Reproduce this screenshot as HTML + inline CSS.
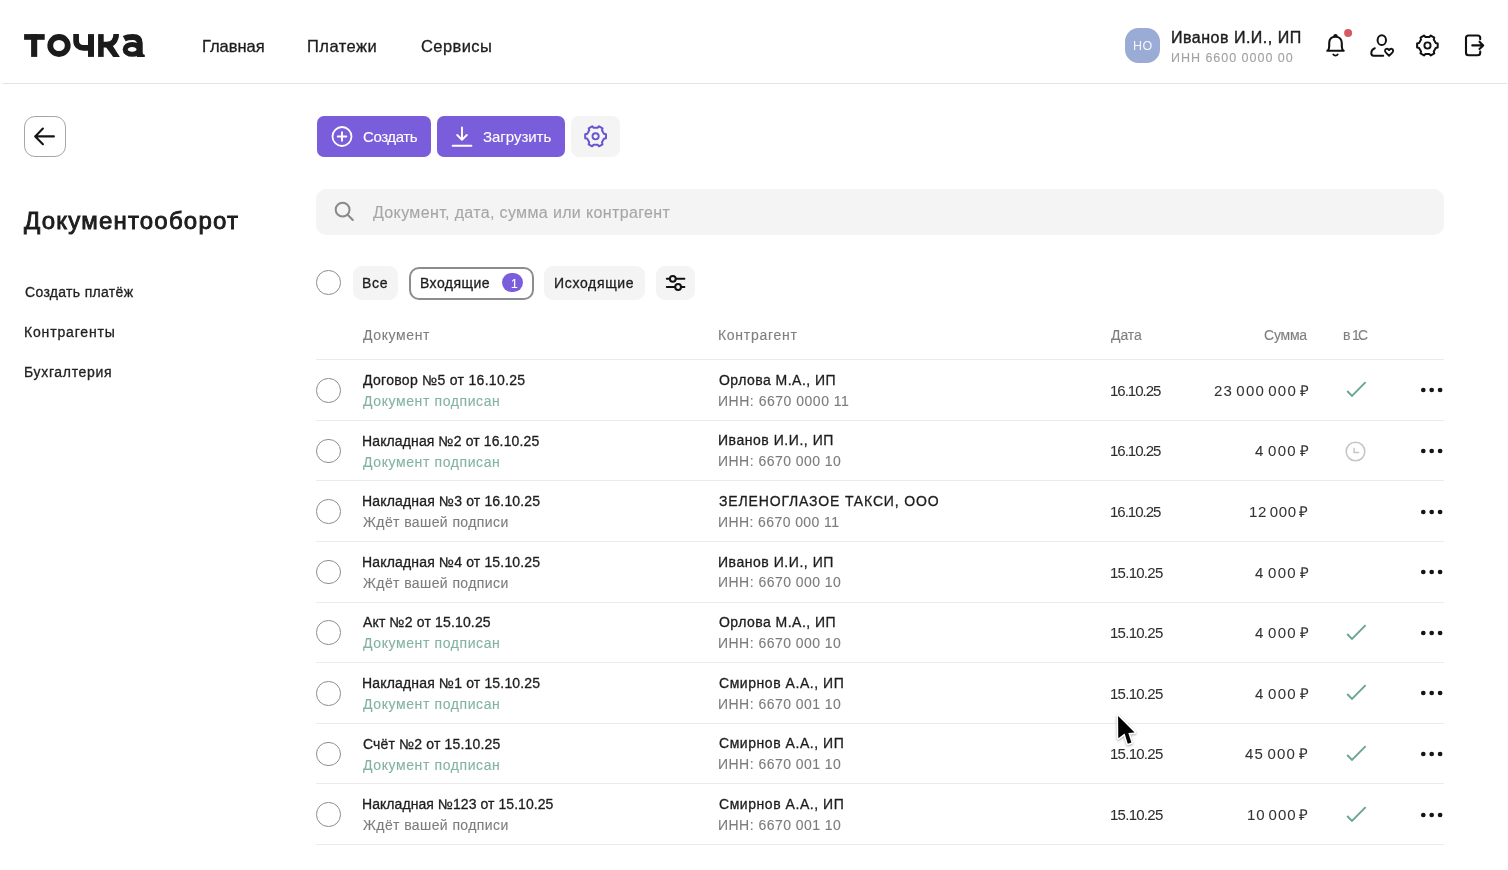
<!DOCTYPE html>
<html lang="ru">
<head>
<meta charset="utf-8">
<title>Документооборот — Точка</title>
<style>
html,body{margin:0;padding:0;background:#fff;}
body{width:1508px;height:870px;position:relative;overflow:hidden;font-family:"Liberation Sans",sans-serif;}
.t{position:absolute;white-space:pre;font-family:"Liberation Sans",sans-serif;will-change:transform;}
.sep{position:absolute;left:316px;width:1128px;height:1px;background:#ebebeb;}
.cb{position:absolute;left:316.3px;width:22.5px;height:22.5px;border:1px solid #8e8e8e;border-radius:50%;}
.dots{position:absolute;left:1419px;fill:#151515;}
.ic{position:absolute;}
.abs{position:absolute;}
</style>
</head>
<body>
<!-- header -->
<svg class="abs" style="left:0;top:0" width="160" height="80" viewBox="0 0 160 80">
  <g fill="#1b1b1b">
    <rect x="24.1" y="34.1" width="20.6" height="5.7"/>
    <rect x="31.1" y="34.1" width="6.1" height="22.8"/>
  </g>
  <ellipse cx="59" cy="45.5" rx="8.75" ry="8.5" fill="none" stroke="#1b1b1b" stroke-width="5.8"/>
  <path d="M76.1 34.1 V40.5 C76.1 45.5 79 47.8 83.5 47.8 H90" fill="none" stroke="#1b1b1b" stroke-width="5.7"/>
  <rect x="88" y="34.1" width="6" height="22.8" fill="#1b1b1b"/>
  <rect x="98.1" y="34.1" width="5.6" height="22.8" fill="#1b1b1b"/>
  <path d="M101 44.6 H106.5 C112.5 44.6 116.2 40.5 116.2 34.1" fill="none" stroke="#1b1b1b" stroke-width="5.6"/>
  <path d="M105.5 46.5 L111.3 43.6 L119.9 56.9 H113.2 Z" fill="#1b1b1b"/>
  <path d="M124.2 38.6 C126.3 37.5 129.5 37.05 132.8 37.05 C137.8 37.05 139.75 39.6 139.75 43.5 V56.9" fill="none" stroke="#1b1b1b" stroke-width="5.9"/>
  <path d="M138 51.5 H141.8 C142.2 53.6 143.3 54.6 144.8 54.8 V56.9 H138 Z" fill="#1b1b1b"/>
  <ellipse cx="132.2" cy="49.4" rx="7.0" ry="4.9" fill="none" stroke="#1b1b1b" stroke-width="5.1"/>
</svg>
<div class="abs" style="left:3px;top:83px;width:1504px;height:1px;background:#e3e3e3"></div>
<div class="abs" style="left:1125px;top:28px;width:35px;height:35px;border-radius:13.5px;background:#9aabd6"></div>
<!-- bell -->
<svg class="abs" style="left:1316px;top:24px" width="40" height="40" viewBox="0 0 40 40">
  <path d="M11.3 26.8 H27.7 C26.2 25.8 25.8 24.5 25.8 22.5 V19.2 C25.8 15 23.2 12.7 19.5 12.7 C15.8 12.7 13.2 15 13.2 19.2 V22.5 C13.2 24.5 12.8 25.8 11.3 26.8 Z" fill="none" stroke="#111" stroke-width="2.1" stroke-linejoin="round"/>
  <path d="M18.2 12.3 C18.3 10.5 20.7 10.5 20.8 12.3" fill="none" stroke="#111" stroke-width="2"/>
  <path d="M17.3 30.5 C18.4 32 20.6 32 21.7 30.5" fill="none" stroke="#111" stroke-width="1.8" stroke-linecap="round"/>
  <circle cx="32.1" cy="8.9" r="4" fill="#d65a61"/>
</svg>
<!-- user heart -->
<svg class="abs" style="left:1360px;top:24px" width="40" height="40" viewBox="0 0 40 40">
  <ellipse cx="21.8" cy="16.2" rx="4.2" ry="4.9" fill="none" stroke="#111" stroke-width="2"/>
  <path d="M14.8 24.2 C12.6 25 11.3 27 11.3 29.3 C11.3 31 12 31.7 13.5 31.7 H23.2" fill="none" stroke="#111" stroke-width="2" stroke-linecap="round"/>
  <path d="M29.1 31.7 L25.9 28.6 C24.6 27.3 24.8 25.2 26.4 24.8 C27.6 24.5 28.5 25.2 29.1 26.1 C29.7 25.2 30.6 24.5 31.8 24.8 C33.4 25.2 33.6 27.3 32.3 28.6 Z" fill="none" stroke="#111" stroke-width="1.9" stroke-linejoin="round"/>
</svg>
<!-- gear -->
<svg class="abs" style="left:1407px;top:25px" width="40" height="40" viewBox="0 0 40 40">
  <path stroke-linejoin="round" d="M28.72 23.04 L30.71 22.50 L30.71 18.50 L28.72 17.96 L26.76 14.57 L27.29 12.58 L23.82 10.57 L22.36 12.02 L18.44 12.02 L16.98 10.57 L13.51 12.58 L14.04 14.57 L12.08 17.96 L10.09 18.50 L10.09 22.50 L12.08 23.04 L14.04 26.43 L13.51 28.42 L16.98 30.43 L18.44 28.98 L22.36 28.98 L23.82 30.43 L27.29 28.42 L26.76 26.43 Z" fill="none" stroke="#111" stroke-width="2"/>
  <circle cx="20.5" cy="20.5" r="3.1" fill="none" stroke="#111" stroke-width="1.9"/>
</svg>
<!-- exit -->
<svg class="abs" style="left:1454.4px;top:24.6px" width="40" height="40" viewBox="0 0 40 40">
  <path d="M26.2 14.2 V13 C26.2 11.3 25.4 10.5 23.7 10.5 H14.5 C12.8 10.5 12 11.3 12 13 V27.8 C12 29.5 12.8 30.3 14.5 30.3 H23.7 C25.4 30.3 26.2 29.5 26.2 27.8 V26.6" fill="none" stroke="#111" stroke-width="2.1" stroke-linecap="round"/>
  <path d="M18.3 20.4 H29.2 M25.5 16.7 L29.2 20.4 L25.5 24.1" fill="none" stroke="#111" stroke-width="2.1" stroke-linecap="round" stroke-linejoin="round"/>
</svg>

<!-- back button -->
<div class="abs" style="left:24.2px;top:116px;width:39.6px;height:38.9px;border:1px solid #a6a6a6;border-radius:11px"></div>
<svg class="abs" style="left:24px;top:116px" width="42" height="41" viewBox="0 0 42 41">
  <path d="M29.9 20.4 H11.2 M18.9 12.6 L11.2 20.4 L18.9 28.2" fill="none" stroke="#141414" stroke-width="2.1" stroke-linecap="round" stroke-linejoin="round"/>
</svg>

<!-- buttons -->
<div class="abs" style="left:316.5px;top:116px;width:114.5px;height:41px;border-radius:7px;background:#7a5ddb"></div>
<svg class="abs" style="left:316.5px;top:116px" width="50" height="41" viewBox="0 0 50 41">
  <circle cx="25" cy="20.5" r="9.5" fill="none" stroke="#fff" stroke-width="1.8"/>
  <path d="M25 16.2 V24.8 M20.7 20.5 H29.3" stroke="#fff" stroke-width="1.9" stroke-linecap="round"/>
</svg>
<div class="abs" style="left:436.6px;top:116px;width:128px;height:41px;border-radius:7px;background:#7a5ddb"></div>
<svg class="abs" style="left:436.6px;top:116px" width="50" height="41" viewBox="0 0 50 41">
  <path d="M25 11.4 V23.8 M20.2 19 L25 23.8 L29.8 19 M15.6 29.8 H34.4" fill="none" stroke="#fff" stroke-width="1.9" stroke-linecap="round" stroke-linejoin="round"/>
</svg>
<div class="abs" style="left:570.6px;top:116px;width:49px;height:41px;border-radius:8px;background:#f4f4f4"></div>
<svg class="abs" style="left:570.6px;top:116px" width="49" height="41" viewBox="0 0 49 41">
  <path stroke-linejoin="round" d="M32.92 22.84 L35.01 22.32 L35.01 18.28 L32.92 17.76 L30.96 14.37 L31.55 12.30 L28.05 10.28 L26.56 11.82 L22.64 11.82 L21.15 10.28 L17.65 12.30 L18.24 14.37 L16.28 17.76 L14.19 18.28 L14.19 22.32 L16.28 22.84 L18.24 26.23 L17.65 28.30 L21.15 30.32 L22.64 28.78 L26.56 28.78 L28.05 30.32 L31.55 28.30 L30.96 26.23 Z" fill="none" stroke="#6a55cf" stroke-width="2"/>
  <circle cx="24.6" cy="20.3" r="3.1" fill="none" stroke="#6a55cf" stroke-width="1.9"/>
</svg>

<!-- search -->
<div class="abs" style="left:316.3px;top:189.3px;width:1128px;height:45.5px;border-radius:10px;background:#f4f4f4"></div>
<svg class="abs" style="left:316.3px;top:189.3px" width="50" height="46" viewBox="0 0 50 46">
  <circle cx="26.6" cy="20.7" r="6.9" fill="none" stroke="#8a8a8a" stroke-width="2"/>
  <path d="M31.6 25.7 L36.8 30.9" stroke="#8a8a8a" stroke-width="2.1" stroke-linecap="round"/>
</svg>

<!-- filter row -->
<div class="abs" style="left:316.3px;top:270.2px;width:22.5px;height:22.5px;border:1px solid #8e8e8e;border-radius:50%"></div>
<div class="abs" style="left:352.7px;top:266.2px;width:45.5px;height:34px;border-radius:9px;background:#f4f4f4"></div>
<div class="abs" style="left:409.3px;top:267px;width:120.5px;height:28.5px;border:2px solid #8d8d8d;border-radius:10px;background:#fff"></div>
<div class="abs" style="left:501.6px;top:273.3px;width:21.5px;height:19.2px;border-radius:10px;background:#7a5ddb"></div>
<div class="abs" style="left:544px;top:266.3px;width:101.4px;height:33.6px;border-radius:9px;background:#f4f4f4"></div>
<div class="abs" style="left:656.1px;top:266.3px;width:39px;height:33.6px;border-radius:9px;background:#f4f4f4"></div>
<svg class="abs" style="left:656.1px;top:266.3px" width="39" height="34" viewBox="0 0 39 34">
  <path d="M10.8 12.8 H28.4 M10.8 21 H28.4" stroke="#111" stroke-width="2" stroke-linecap="round"/>
  <circle cx="16.8" cy="12.8" r="2.9" fill="#f4f4f4" stroke="#111" stroke-width="2"/>
  <circle cx="22.1" cy="21" r="2.9" fill="#f4f4f4" stroke="#111" stroke-width="2"/>
</svg>



<div class="sep" style="top:359px"></div>
<div class="sep" style="top:420px"></div>
<div class="sep" style="top:480px"></div>
<div class="sep" style="top:541px"></div>
<div class="sep" style="top:602px"></div>
<div class="sep" style="top:662px"></div>
<div class="sep" style="top:723px"></div>
<div class="sep" style="top:783px"></div>
<div class="sep" style="top:844px"></div>
<div class="cb" style="top:378.05px"></div>
<svg class="dots" style="top:384.30px" width="30" height="12" viewBox="0 0 30 12"><circle cx="4.3" cy="6" r="2.35"/><circle cx="12.7" cy="6" r="2.35"/><circle cx="21.1" cy="6" r="2.35"/></svg>
<svg class="ic" style="left:1340px;top:375.30px" width="30" height="30" viewBox="0 0 30 30"><path d="M7.2 16 L12 21 L25.6 7.1" fill="none" stroke="#6ba58f" stroke-width="1.9" stroke-linecap="butt" stroke-linejoin="miter"/></svg>
<div class="cb" style="top:438.65px"></div>
<svg class="dots" style="top:444.90px" width="30" height="12" viewBox="0 0 30 12"><circle cx="4.3" cy="6" r="2.35"/><circle cx="12.7" cy="6" r="2.35"/><circle cx="21.1" cy="6" r="2.35"/></svg>
<svg class="ic" style="left:1340px;top:435.90px" width="30" height="30" viewBox="0 0 30 30"><circle cx="15.5" cy="15.5" r="9.3" fill="none" stroke="#c6c6c6" stroke-width="1.6"/><path d="M14.1 11.8 V16.4 H19.2" fill="none" stroke="#c6c6c6" stroke-width="1.5"/></svg>
<div class="cb" style="top:499.25px"></div>
<svg class="dots" style="top:505.50px" width="30" height="12" viewBox="0 0 30 12"><circle cx="4.3" cy="6" r="2.35"/><circle cx="12.7" cy="6" r="2.35"/><circle cx="21.1" cy="6" r="2.35"/></svg>
<div class="cb" style="top:559.85px"></div>
<svg class="dots" style="top:566.10px" width="30" height="12" viewBox="0 0 30 12"><circle cx="4.3" cy="6" r="2.35"/><circle cx="12.7" cy="6" r="2.35"/><circle cx="21.1" cy="6" r="2.35"/></svg>
<div class="cb" style="top:620.45px"></div>
<svg class="dots" style="top:626.70px" width="30" height="12" viewBox="0 0 30 12"><circle cx="4.3" cy="6" r="2.35"/><circle cx="12.7" cy="6" r="2.35"/><circle cx="21.1" cy="6" r="2.35"/></svg>
<svg class="ic" style="left:1340px;top:617.70px" width="30" height="30" viewBox="0 0 30 30"><path d="M7.2 16 L12 21 L25.6 7.1" fill="none" stroke="#6ba58f" stroke-width="1.9" stroke-linecap="butt" stroke-linejoin="miter"/></svg>
<div class="cb" style="top:681.05px"></div>
<svg class="dots" style="top:687.30px" width="30" height="12" viewBox="0 0 30 12"><circle cx="4.3" cy="6" r="2.35"/><circle cx="12.7" cy="6" r="2.35"/><circle cx="21.1" cy="6" r="2.35"/></svg>
<svg class="ic" style="left:1340px;top:678.30px" width="30" height="30" viewBox="0 0 30 30"><path d="M7.2 16 L12 21 L25.6 7.1" fill="none" stroke="#6ba58f" stroke-width="1.9" stroke-linecap="butt" stroke-linejoin="miter"/></svg>
<div class="cb" style="top:741.65px"></div>
<svg class="dots" style="top:747.90px" width="30" height="12" viewBox="0 0 30 12"><circle cx="4.3" cy="6" r="2.35"/><circle cx="12.7" cy="6" r="2.35"/><circle cx="21.1" cy="6" r="2.35"/></svg>
<svg class="ic" style="left:1340px;top:738.90px" width="30" height="30" viewBox="0 0 30 30"><path d="M7.2 16 L12 21 L25.6 7.1" fill="none" stroke="#6ba58f" stroke-width="1.9" stroke-linecap="butt" stroke-linejoin="miter"/></svg>
<div class="cb" style="top:802.25px"></div>
<svg class="dots" style="top:808.50px" width="30" height="12" viewBox="0 0 30 12"><circle cx="4.3" cy="6" r="2.35"/><circle cx="12.7" cy="6" r="2.35"/><circle cx="21.1" cy="6" r="2.35"/></svg>
<svg class="ic" style="left:1340px;top:799.50px" width="30" height="30" viewBox="0 0 30 30"><path d="M7.2 16 L12 21 L25.6 7.1" fill="none" stroke="#6ba58f" stroke-width="1.9" stroke-linecap="butt" stroke-linejoin="miter"/></svg>
<span class="t" style="left:202.40px;top:38.00px;font-size:16.5px;line-height:16.5px;letter-spacing:-0.028px;color:#1d1d1f;-webkit-text-stroke:0.3px #1d1d1f;">Главная</span>
<span class="t" style="left:307.10px;top:38.00px;font-size:16.5px;line-height:16.5px;letter-spacing:0.466px;color:#1d1d1f;-webkit-text-stroke:0.3px #1d1d1f;">Платежи</span>
<span class="t" style="left:420.60px;top:38.00px;font-size:16.5px;line-height:16.5px;letter-spacing:0.416px;color:#1d1d1f;-webkit-text-stroke:0.3px #1d1d1f;">Сервисы</span>
<span class="t" style="left:1171.00px;top:29.50px;font-size:16px;line-height:16px;letter-spacing:0.501px;color:#1d1d1f;-webkit-text-stroke:0.4px #1d1d1f;">Иванов И.И., ИП</span>
<span class="t" style="left:1171.00px;top:51.80px;font-size:12.5px;line-height:12.5px;letter-spacing:0.978px;color:#a3a3a3;-webkit-text-stroke:0.12px #a3a3a3;">ИНН 6600 0000 00</span>
<span class="t" style="left:1132.50px;top:39.60px;font-size:12.5px;line-height:12.5px;letter-spacing:0.473px;color:#f4f6fb;">НО</span>
<span class="t" style="left:23.75px;top:209.40px;font-size:24px;line-height:24px;letter-spacing:1.203px;color:#1d1d1f;-webkit-text-stroke:0.9px #1d1d1f;">Документооборот</span>
<span class="t" style="left:24.50px;top:285.10px;font-size:14px;line-height:14px;letter-spacing:0.321px;color:#222222;-webkit-text-stroke:0.3px #222222;">Создать платёж</span>
<span class="t" style="left:23.50px;top:325.00px;font-size:14px;line-height:14px;letter-spacing:0.841px;color:#222222;-webkit-text-stroke:0.3px #222222;">Контрагенты</span>
<span class="t" style="left:23.50px;top:364.80px;font-size:14px;line-height:14px;letter-spacing:0.672px;color:#222222;-webkit-text-stroke:0.3px #222222;">Бухгалтерия</span>
<span class="t" style="left:363.00px;top:128.90px;font-size:15px;line-height:15px;letter-spacing:-0.398px;color:#ffffff;-webkit-text-stroke:0.12px #ffffff;">Создать</span>
<span class="t" style="left:483.00px;top:128.80px;font-size:15px;line-height:15px;letter-spacing:-0.034px;color:#ffffff;-webkit-text-stroke:0.12px #ffffff;">Загрузить</span>
<span class="t" style="left:373.00px;top:205.20px;font-size:16px;line-height:16px;letter-spacing:0.355px;color:#a6a6a6;-webkit-text-stroke:0.12px #a6a6a6;">Документ, дата, сумма или контрагент</span>
<span class="t" style="left:362.10px;top:275.60px;font-size:14px;line-height:14px;letter-spacing:0.681px;color:#1d1d1f;-webkit-text-stroke:0.3px #1d1d1f;">Все</span>
<span class="t" style="left:419.90px;top:275.70px;font-size:14px;line-height:14px;letter-spacing:0.444px;color:#1d1d1f;-webkit-text-stroke:0.3px #1d1d1f;">Входящие</span>
<span class="t" style="left:554.30px;top:275.80px;font-size:14px;line-height:14px;letter-spacing:0.666px;color:#1d1d1f;-webkit-text-stroke:0.3px #1d1d1f;">Исходящие</span>
<span class="t" style="left:510.50px;top:277.60px;font-size:12px;line-height:12px;letter-spacing:0.000px;color:#ffffff;-webkit-text-stroke:0.12px #ffffff;">1</span>
<span class="t" style="left:363.10px;top:328.30px;font-size:14px;line-height:14px;letter-spacing:0.615px;color:#7f7f7f;-webkit-text-stroke:0.12px #7f7f7f;">Документ</span>
<span class="t" style="left:718.00px;top:328.20px;font-size:14px;line-height:14px;letter-spacing:0.714px;color:#7f7f7f;-webkit-text-stroke:0.12px #7f7f7f;">Контрагент</span>
<span class="t" style="left:1111.30px;top:328.20px;font-size:14px;line-height:14px;letter-spacing:-0.072px;color:#7f7f7f;-webkit-text-stroke:0.12px #7f7f7f;">Дата</span>
<span class="t" style="left:1264.20px;top:328.20px;font-size:14px;line-height:14px;letter-spacing:-0.226px;color:#7f7f7f;-webkit-text-stroke:0.12px #7f7f7f;">Сумма</span>
<span class="t" style="left:1343.00px;top:328.20px;font-size:14px;line-height:14px;letter-spacing:-1.871px;word-spacing:1.5px;color:#7f7f7f;-webkit-text-stroke:0.12px #7f7f7f;">в 1С</span>
<span class="t" style="left:362.50px;top:373.00px;font-size:14px;line-height:14px;letter-spacing:0.303px;color:#1d1d1f;-webkit-text-stroke:0.3px #1d1d1f;">Договор №5 от 16.10.25</span>
<span class="t" style="left:362.50px;top:394.00px;font-size:14px;line-height:14px;letter-spacing:0.606px;color:#84b3a2;-webkit-text-stroke:0.12px #84b3a2;">Документ подписан</span>
<span class="t" style="left:719.00px;top:372.80px;font-size:14px;line-height:14px;letter-spacing:0.472px;color:#1d1d1f;-webkit-text-stroke:0.3px #1d1d1f;">Орлова М.А., ИП</span>
<span class="t" style="left:718.30px;top:393.50px;font-size:14px;line-height:14px;letter-spacing:0.514px;color:#7c7c7c;-webkit-text-stroke:0.12px #7c7c7c;">ИНН: 6670 0000 11</span>
<span class="t" style="left:1110.00px;top:382.80px;font-size:15px;line-height:15px;letter-spacing:-1.007px;color:#2e2e2e;-webkit-text-stroke:0.05px #2e2e2e;">16.10.25</span>
<span class="t" style="left:1213.60px;top:382.80px;font-size:15px;line-height:15px;letter-spacing:1.233px;word-spacing:-2.2px;color:#333333;-webkit-text-stroke:0.05px #333333;">23 000 000 ₽</span>
<span class="t" style="left:361.50px;top:433.60px;font-size:14px;line-height:14px;letter-spacing:0.127px;color:#1d1d1f;-webkit-text-stroke:0.3px #1d1d1f;">Накладная №2 от 16.10.25</span>
<span class="t" style="left:362.50px;top:454.60px;font-size:14px;line-height:14px;letter-spacing:0.606px;color:#84b3a2;-webkit-text-stroke:0.12px #84b3a2;">Документ подписан</span>
<span class="t" style="left:718.00px;top:433.40px;font-size:14px;line-height:14px;letter-spacing:0.539px;color:#1d1d1f;-webkit-text-stroke:0.3px #1d1d1f;">Иванов И.И., ИП</span>
<span class="t" style="left:718.30px;top:454.10px;font-size:14px;line-height:14px;letter-spacing:0.464px;color:#7c7c7c;-webkit-text-stroke:0.12px #7c7c7c;">ИНН: 6670 000 10</span>
<span class="t" style="left:1110.00px;top:443.40px;font-size:15px;line-height:15px;letter-spacing:-1.007px;color:#2e2e2e;-webkit-text-stroke:0.05px #2e2e2e;">16.10.25</span>
<span class="t" style="left:1254.50px;top:443.40px;font-size:15px;line-height:15px;letter-spacing:1.333px;word-spacing:-2.2px;color:#333333;-webkit-text-stroke:0.05px #333333;">4 000 ₽</span>
<span class="t" style="left:361.50px;top:494.20px;font-size:14px;line-height:14px;letter-spacing:0.166px;color:#1d1d1f;-webkit-text-stroke:0.3px #1d1d1f;">Накладная №3 от 16.10.25</span>
<span class="t" style="left:362.50px;top:515.20px;font-size:14px;line-height:14px;letter-spacing:0.400px;color:#7c7c7c;-webkit-text-stroke:0.12px #7c7c7c;">Ждёт вашей подписи</span>
<span class="t" style="left:719.00px;top:494.00px;font-size:14px;line-height:14px;letter-spacing:0.848px;color:#1d1d1f;-webkit-text-stroke:0.3px #1d1d1f;">ЗЕЛЕНОГЛАЗОЕ ТАКСИ, ООО</span>
<span class="t" style="left:718.30px;top:514.70px;font-size:14px;line-height:14px;letter-spacing:0.407px;color:#7c7c7c;-webkit-text-stroke:0.12px #7c7c7c;">ИНН: 6670 000 11</span>
<span class="t" style="left:1110.00px;top:504.00px;font-size:15px;line-height:15px;letter-spacing:-1.007px;color:#2e2e2e;-webkit-text-stroke:0.05px #2e2e2e;">16.10.25</span>
<span class="t" style="left:1249.30px;top:504.00px;font-size:15px;line-height:15px;letter-spacing:0.693px;word-spacing:-2.2px;color:#333333;-webkit-text-stroke:0.05px #333333;">12 000 ₽</span>
<span class="t" style="left:361.50px;top:554.80px;font-size:14px;line-height:14px;letter-spacing:0.166px;color:#1d1d1f;-webkit-text-stroke:0.3px #1d1d1f;">Накладная №4 от 15.10.25</span>
<span class="t" style="left:362.50px;top:575.80px;font-size:14px;line-height:14px;letter-spacing:0.400px;color:#7c7c7c;-webkit-text-stroke:0.12px #7c7c7c;">Ждёт вашей подписи</span>
<span class="t" style="left:718.00px;top:554.60px;font-size:14px;line-height:14px;letter-spacing:0.539px;color:#1d1d1f;-webkit-text-stroke:0.3px #1d1d1f;">Иванов И.И., ИП</span>
<span class="t" style="left:718.30px;top:575.30px;font-size:14px;line-height:14px;letter-spacing:0.464px;color:#7c7c7c;-webkit-text-stroke:0.12px #7c7c7c;">ИНН: 6670 000 10</span>
<span class="t" style="left:1110.00px;top:564.60px;font-size:15px;line-height:15px;letter-spacing:-0.735px;color:#2e2e2e;-webkit-text-stroke:0.05px #2e2e2e;">15.10.25</span>
<span class="t" style="left:1254.50px;top:564.60px;font-size:15px;line-height:15px;letter-spacing:1.333px;word-spacing:-2.2px;color:#333333;-webkit-text-stroke:0.05px #333333;">4 000 ₽</span>
<span class="t" style="left:362.50px;top:615.40px;font-size:14px;line-height:14px;letter-spacing:0.162px;color:#1d1d1f;-webkit-text-stroke:0.3px #1d1d1f;">Акт №2 от 15.10.25</span>
<span class="t" style="left:362.50px;top:636.40px;font-size:14px;line-height:14px;letter-spacing:0.606px;color:#84b3a2;-webkit-text-stroke:0.12px #84b3a2;">Документ подписан</span>
<span class="t" style="left:719.00px;top:615.20px;font-size:14px;line-height:14px;letter-spacing:0.472px;color:#1d1d1f;-webkit-text-stroke:0.3px #1d1d1f;">Орлова М.А., ИП</span>
<span class="t" style="left:718.30px;top:635.90px;font-size:14px;line-height:14px;letter-spacing:0.464px;color:#7c7c7c;-webkit-text-stroke:0.12px #7c7c7c;">ИНН: 6670 000 10</span>
<span class="t" style="left:1110.00px;top:625.20px;font-size:15px;line-height:15px;letter-spacing:-0.735px;color:#2e2e2e;-webkit-text-stroke:0.05px #2e2e2e;">15.10.25</span>
<span class="t" style="left:1254.50px;top:625.20px;font-size:15px;line-height:15px;letter-spacing:1.333px;word-spacing:-2.2px;color:#333333;-webkit-text-stroke:0.05px #333333;">4 000 ₽</span>
<span class="t" style="left:361.50px;top:676.00px;font-size:14px;line-height:14px;letter-spacing:0.166px;color:#1d1d1f;-webkit-text-stroke:0.3px #1d1d1f;">Накладная №1 от 15.10.25</span>
<span class="t" style="left:362.50px;top:697.00px;font-size:14px;line-height:14px;letter-spacing:0.606px;color:#84b3a2;-webkit-text-stroke:0.12px #84b3a2;">Документ подписан</span>
<span class="t" style="left:719.00px;top:675.80px;font-size:14px;line-height:14px;letter-spacing:0.550px;color:#1d1d1f;-webkit-text-stroke:0.3px #1d1d1f;">Смирнов А.А., ИП</span>
<span class="t" style="left:718.30px;top:696.50px;font-size:14px;line-height:14px;letter-spacing:0.464px;color:#7c7c7c;-webkit-text-stroke:0.12px #7c7c7c;">ИНН: 6670 001 10</span>
<span class="t" style="left:1110.00px;top:685.80px;font-size:15px;line-height:15px;letter-spacing:-0.735px;color:#2e2e2e;-webkit-text-stroke:0.05px #2e2e2e;">15.10.25</span>
<span class="t" style="left:1254.50px;top:685.80px;font-size:15px;line-height:15px;letter-spacing:1.333px;word-spacing:-2.2px;color:#333333;-webkit-text-stroke:0.05px #333333;">4 000 ₽</span>
<span class="t" style="left:362.50px;top:736.60px;font-size:14px;line-height:14px;letter-spacing:0.164px;color:#1d1d1f;-webkit-text-stroke:0.3px #1d1d1f;">Счёт №2 от 15.10.25</span>
<span class="t" style="left:362.50px;top:757.60px;font-size:14px;line-height:14px;letter-spacing:0.606px;color:#84b3a2;-webkit-text-stroke:0.12px #84b3a2;">Документ подписан</span>
<span class="t" style="left:719.00px;top:736.40px;font-size:14px;line-height:14px;letter-spacing:0.550px;color:#1d1d1f;-webkit-text-stroke:0.3px #1d1d1f;">Смирнов А.А., ИП</span>
<span class="t" style="left:718.30px;top:757.10px;font-size:14px;line-height:14px;letter-spacing:0.464px;color:#7c7c7c;-webkit-text-stroke:0.12px #7c7c7c;">ИНН: 6670 001 10</span>
<span class="t" style="left:1110.00px;top:746.40px;font-size:15px;line-height:15px;letter-spacing:-0.735px;color:#2e2e2e;-webkit-text-stroke:0.05px #2e2e2e;">15.10.25</span>
<span class="t" style="left:1245.40px;top:746.40px;font-size:15px;line-height:15px;letter-spacing:1.251px;word-spacing:-2.2px;color:#333333;-webkit-text-stroke:0.05px #333333;">45 000 ₽</span>
<span class="t" style="left:361.50px;top:797.20px;font-size:14px;line-height:14px;letter-spacing:0.062px;color:#1d1d1f;-webkit-text-stroke:0.3px #1d1d1f;">Накладная №123 от 15.10.25</span>
<span class="t" style="left:362.50px;top:818.20px;font-size:14px;line-height:14px;letter-spacing:0.400px;color:#7c7c7c;-webkit-text-stroke:0.12px #7c7c7c;">Ждёт вашей подписи</span>
<span class="t" style="left:719.00px;top:797.00px;font-size:14px;line-height:14px;letter-spacing:0.550px;color:#1d1d1f;-webkit-text-stroke:0.3px #1d1d1f;">Смирнов А.А., ИП</span>
<span class="t" style="left:718.30px;top:817.70px;font-size:14px;line-height:14px;letter-spacing:0.464px;color:#7c7c7c;-webkit-text-stroke:0.12px #7c7c7c;">ИНН: 6670 001 10</span>
<span class="t" style="left:1110.00px;top:807.00px;font-size:15px;line-height:15px;letter-spacing:-0.735px;color:#2e2e2e;-webkit-text-stroke:0.05px #2e2e2e;">15.10.25</span>
<span class="t" style="left:1247.30px;top:807.00px;font-size:15px;line-height:15px;letter-spacing:0.979px;word-spacing:-2.2px;color:#333333;-webkit-text-stroke:0.05px #333333;">10 000 ₽</span>
<!-- cursor -->
<svg class="abs" style="left:1100px;top:700px;filter:drop-shadow(0 1px 1.2px rgba(0,0,0,0.35))" width="50" height="60" viewBox="1100 700 50 60">
  <path d="M1118.1 715.9 L1118.3 738.3 L1124.6 733.5 L1127.8 743.8 L1131.4 742.6 L1128.3 733 L1134.6 732.4 Z" fill="#000" stroke="#fff" stroke-width="3" stroke-linejoin="round" paint-order="stroke"/>
</svg>
</body>
</html>
